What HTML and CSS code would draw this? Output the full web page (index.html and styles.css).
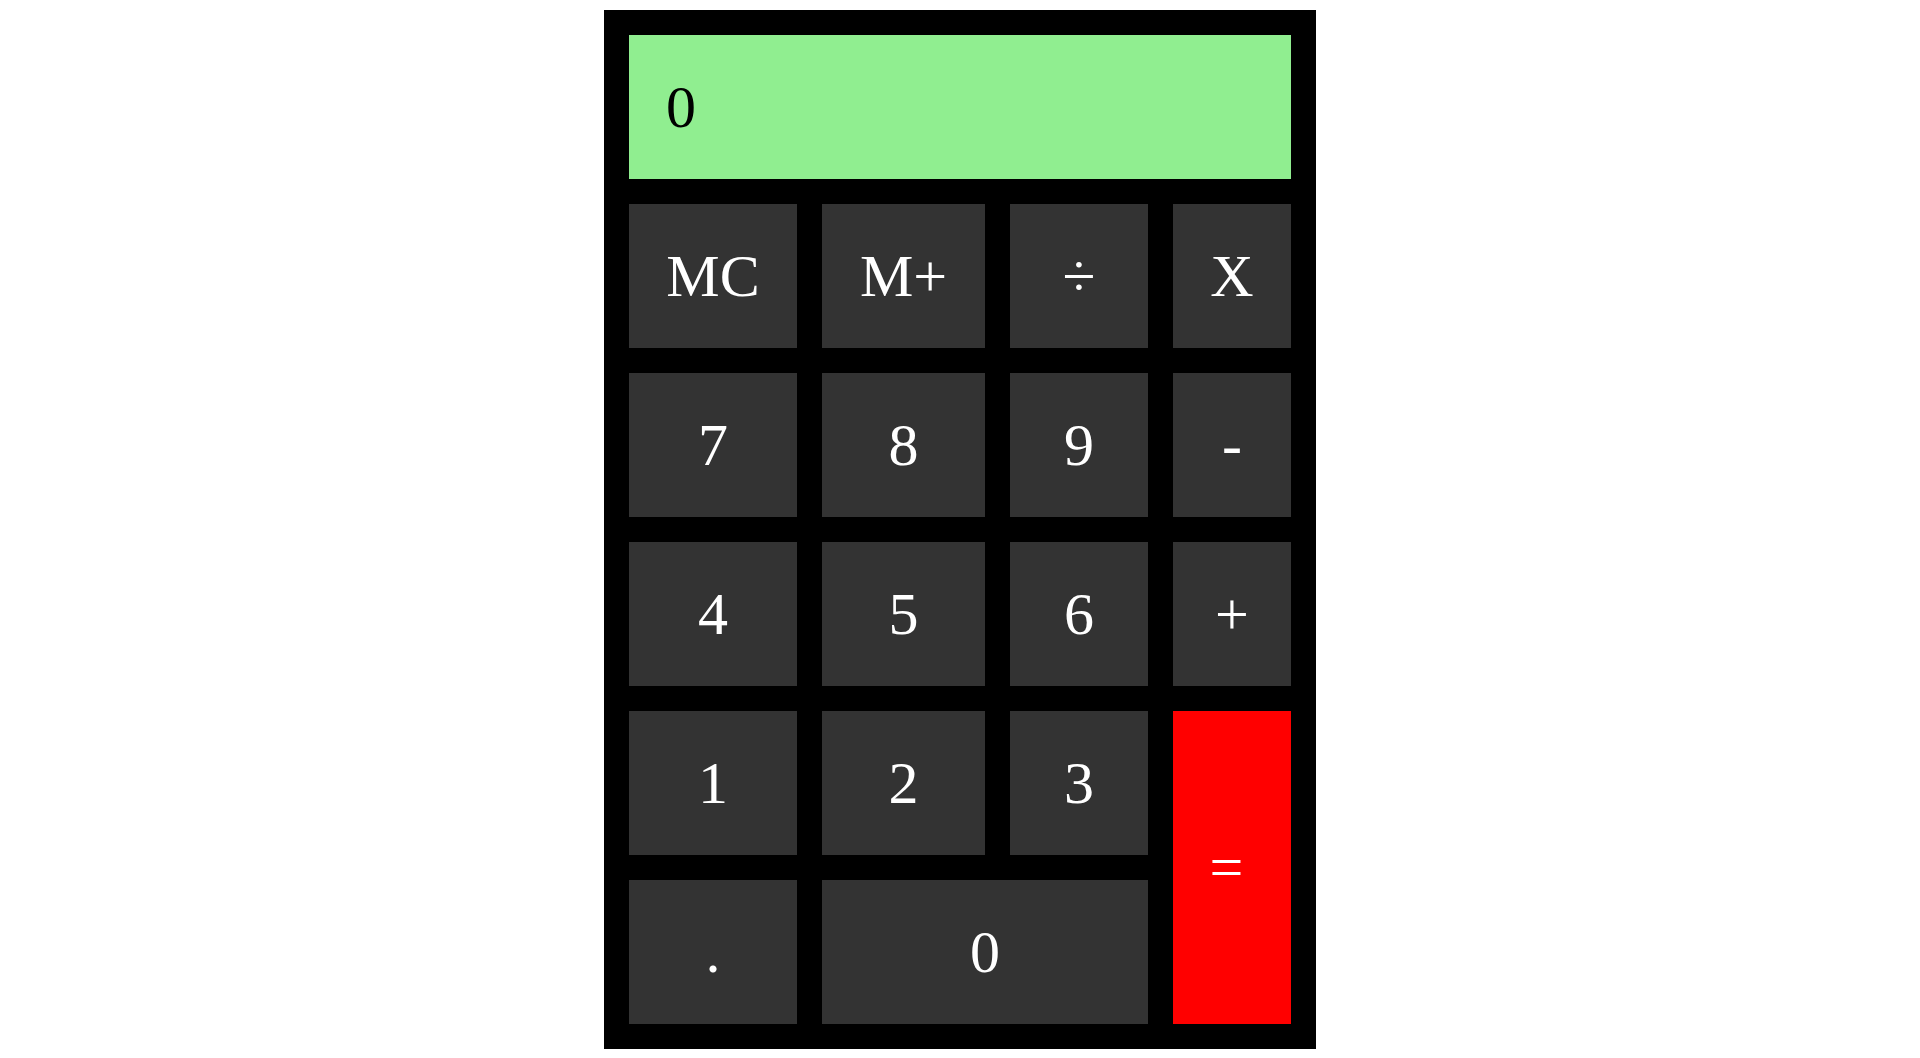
FILE: index.html
```html
<!DOCTYPE html>
<html>
<head>
<meta charset="utf-8">
<link rel="stylesheet" href="styles.css">
</head>
<body>
<div class="calc">
  <div class="display">0</div>
  <div class="keys">
    <div class="key">MC</div>
    <div class="key">M+</div>
    <div class="key">÷</div>
    <div class="key">X</div>
    <div class="key">7</div>
    <div class="key">8</div>
    <div class="key">9</div>
    <div class="key">-</div>
    <div class="key">4</div>
    <div class="key">5</div>
    <div class="key">6</div>
    <div class="key">+</div>
    <div class="key">1</div>
    <div class="key">2</div>
    <div class="key">3</div>
    <div class="key equal">=</div>
    <div class="key">.</div>
    <div class="key zero">0</div>
  </div>
</div>
</body>
</html>
```
FILE: styles.css
```css
html, body {
  margin: 0;
  padding: 0;
  background: #ffffff;
}
body {
  padding-top: 10px;
  font-family: "Liberation Serif", "Times New Roman", serif;
}
.calc {
  width: 712px;
  box-sizing: border-box;
  margin: 0 auto;
  background: #000000;
  padding: 25px;
  display: flex;
  flex-direction: column;
  gap: 25px;
}
.display {
  height: 144px;
  background: #90ee90;
  color: #000000;
  font-size: 60px;
  display: flex;
  align-items: center;
  padding-left: 37px;
}
.keys {
  display: grid;
  grid-template-columns: 168px 163px 138px 118px;
  grid-auto-rows: 144px;
  gap: 25px;
}
.key {
  background: #333333;
  color: #ffffff;
  font-size: 60px;
  display: flex;
  align-items: center;
  justify-content: center;
}
.equal {
  background: #ff0000;
  grid-column: 4;
  grid-row: 4 / span 2;
  padding-right: 11px;
}
.zero {
  grid-column: 2 / span 2;
}
```
